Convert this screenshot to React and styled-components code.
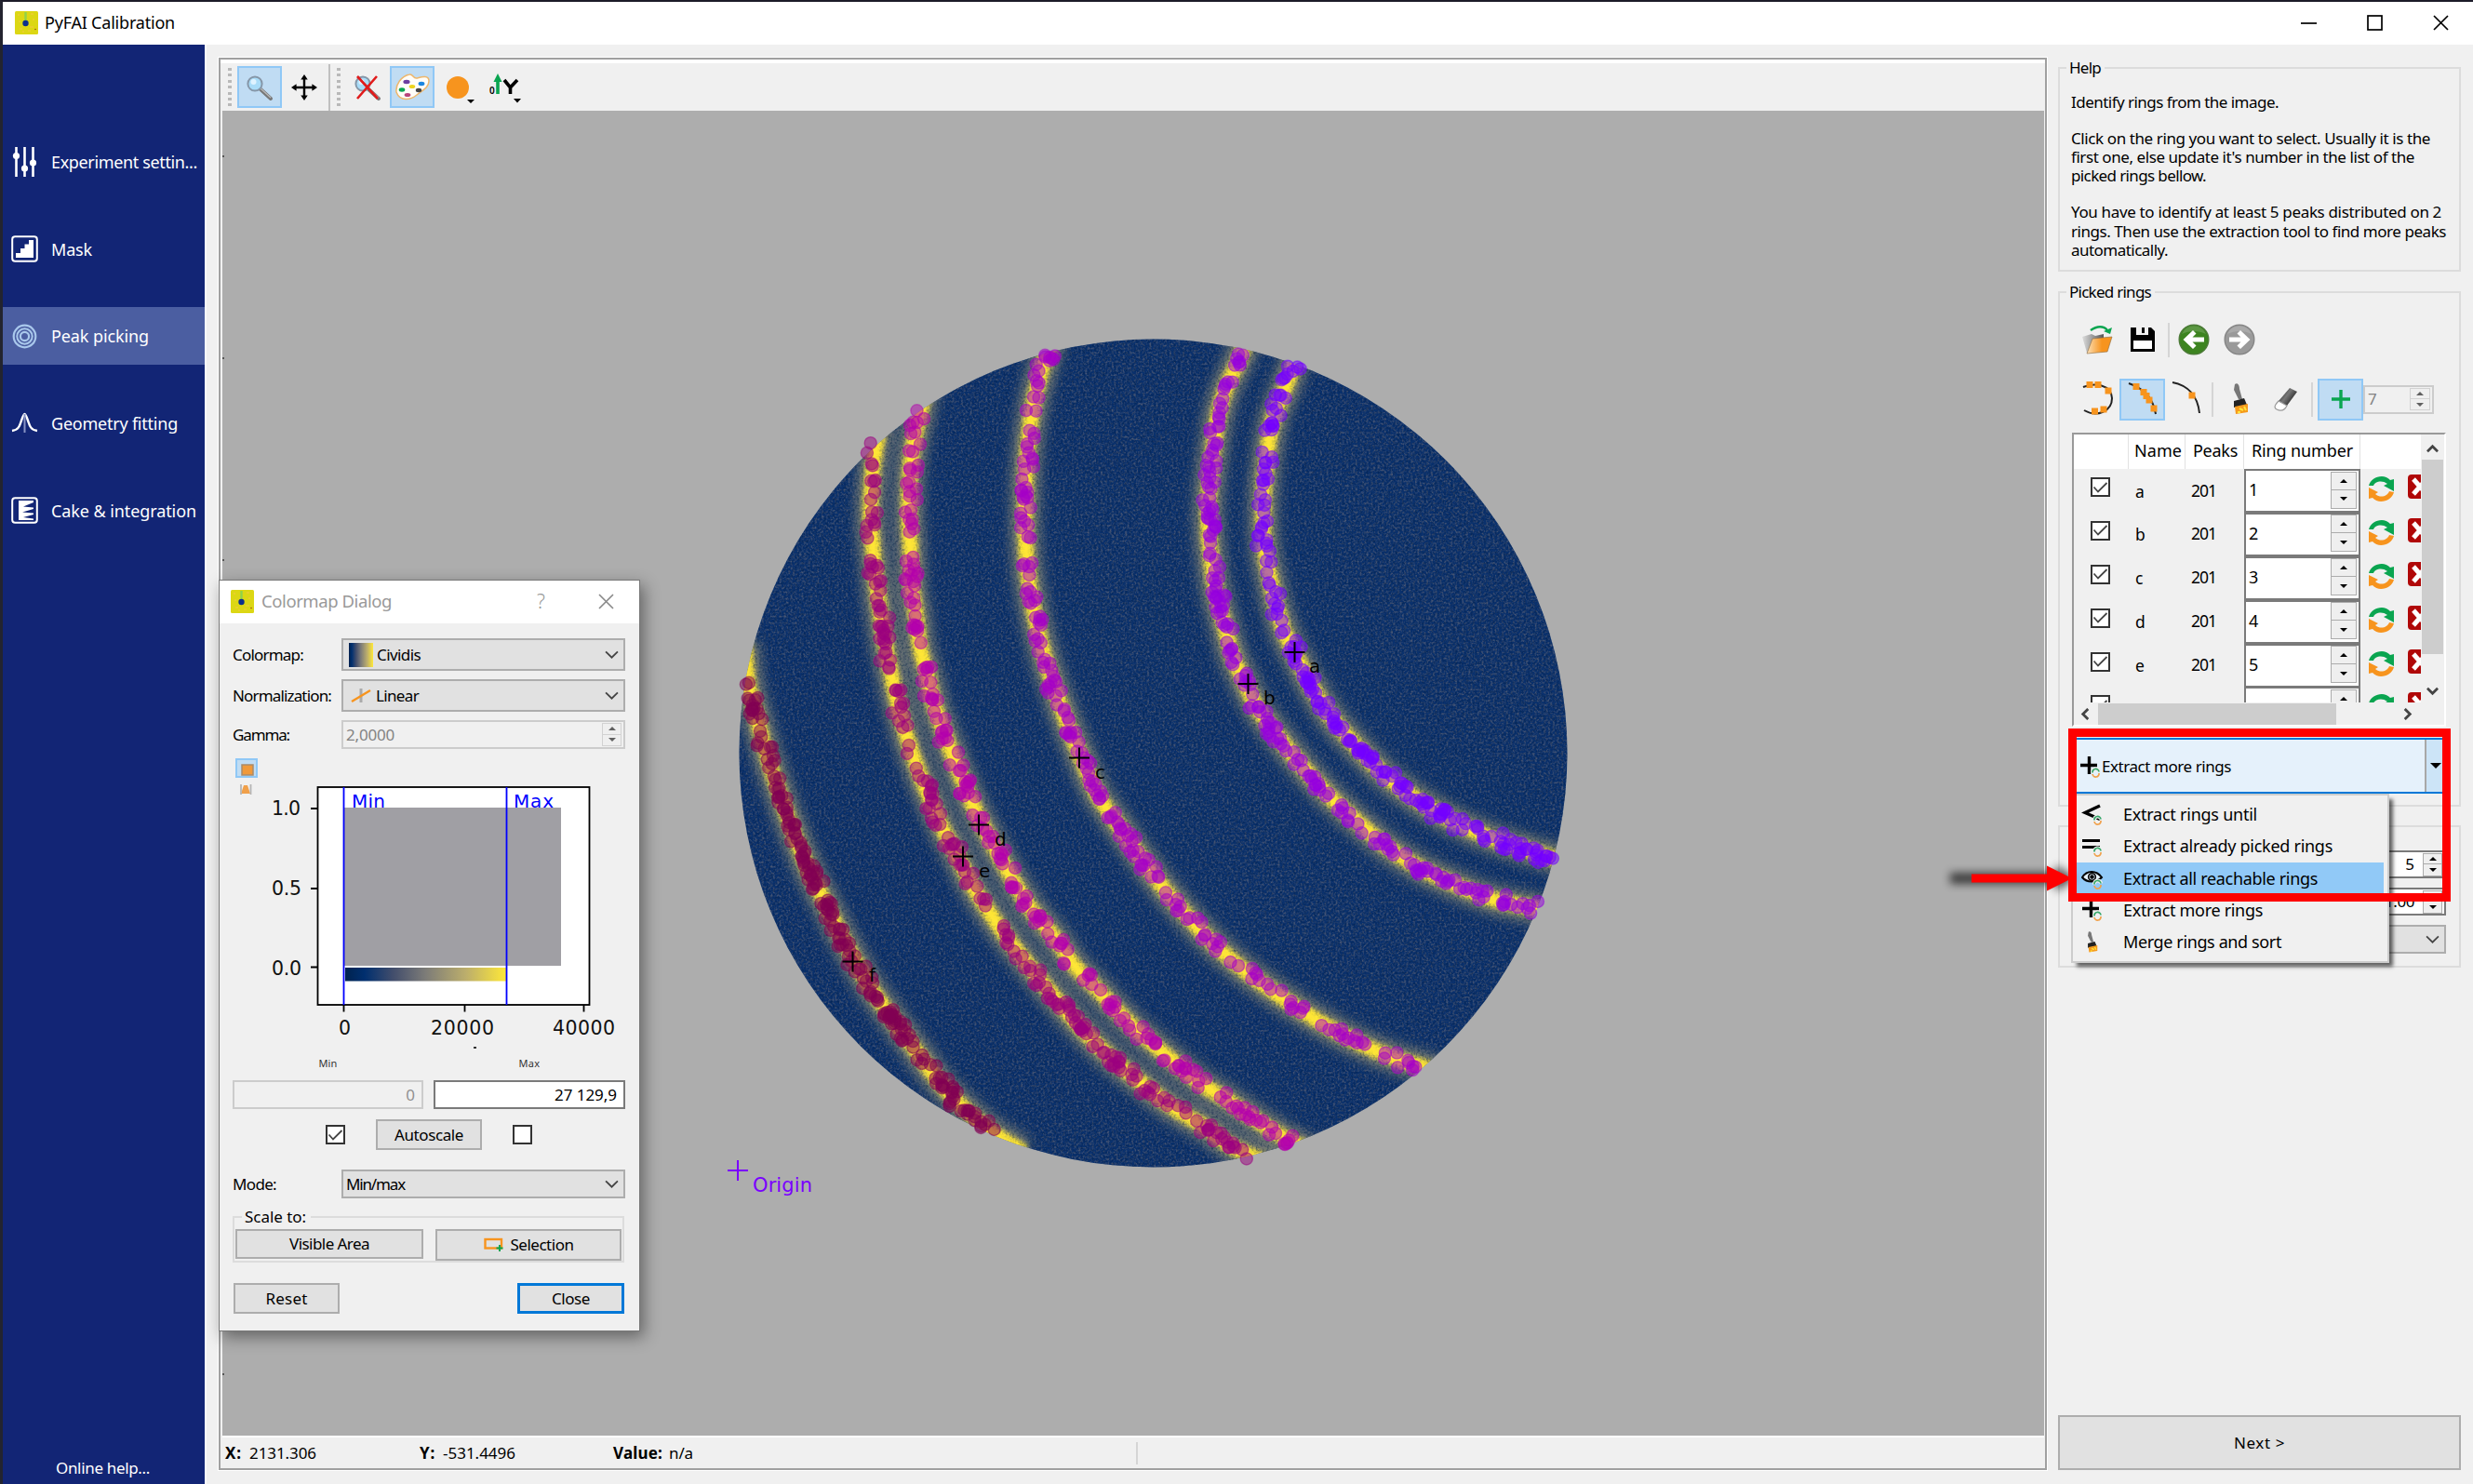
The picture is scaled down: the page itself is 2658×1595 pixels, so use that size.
import React, { useLayoutEffect, useRef, useState } from "react";
import styled, { createGlobalStyle, css } from "styled-components";

const UI = '"Noto Sans", "Open Sans", sans-serif';
const PLOT = '"DejaVu Sans", sans-serif';

const Global = createGlobalStyle`
  * { box-sizing: border-box; }
  html, body { margin: 0; padding: 0; background: #f0f0f0; overflow: hidden; }
  svg { display: block; flex: none; }
`;

/* ---------- text fitted to a given advance width ---------- */

const FitSpan = styled.span`
  display: inline-block;
  white-space: pre;
  flex: none;
`;

function Fit({ w, children }) {
  const ref = useRef(null);
  const [spacing, setSpacing] = useState(0);
  useLayoutEffect(() => {
    const natural = ref.current.getBoundingClientRect().width;
    setSpacing((w - natural) / String(children).length);
  }, [w, children]);
  return (
    <FitSpan ref={ref} style={{ letterSpacing: `${spacing}px` }}>
      {children}
    </FitSpan>
  );
}

/* ---------- window frame ---------- */

const Window = styled.div`
  position: relative;
  width: 2658px;
  height: 1595px;
  display: flex;
  flex-direction: column;
  background: #f0f0f0;
  border-top: 2px solid #1c1b29;
  border-left: 3px solid #23242f;
  font: 17px/20px ${UI};
  color: #000;
  overflow: hidden;
`;

const TitleBar = styled.header`
  height: 46px;
  flex: none;
  display: flex;
  align-items: center;
  background: #fff;
  padding: 0 26px 2px 13px;
  font-size: 18px;
  gap: 7px;
`;

const Spacer = styled.div`
  flex: 1;
`;

const CaptionButtons = styled.div`
  display: flex;
  align-items: center;
  gap: 54px;
`;

const Body = styled.div`
  flex: 1;
  display: flex;
  min-height: 0;
`;

const Sidebar = styled.nav`
  width: 219px;
  flex: none;
  display: flex;
  flex-direction: column;
  background: #122575;
  border-right: 2px solid #fbfbfb;
  padding-top: 95px;
  gap: 31.7px;
  color: #fff;
  font-size: 18px;
`;

const NavItem = styled.div`
  height: 62px;
  flex: none;
  display: flex;
  align-items: center;
  gap: 14px;
  padding-left: 9px;
  background: ${(p) => (p.$active ? "#4b5ea1" : "transparent")};
`;

const OnlineHelp = styled.div`
  margin: auto 2px 7px 0;
  text-align: center;
  font-size: 17px;
`;

/* ---------- plot panel ---------- */

const PlotPanel = styled.section`
  margin: 14px 0 15px 13px;
  width: 1965px;
  flex: none;
  display: flex;
  flex-direction: column;
  border: 2px solid #a0a0a0;
  outline: 1px solid #fff;
  padding: 2px 1px 0 2px;
  background: linear-gradient(#fff 0 4px, #f0f0f0 4px);
`;

const PlotToolbar = styled.div`
  height: 53px;
  flex: none;
  display: flex;
  align-items: center;
  padding: 2px 0 0 6px;
`;

const Handle = styled.div`
  width: 4px;
  height: 42px;
  margin-right: ${(p) => p.$gap}px;
  background: repeating-linear-gradient(#b9b9b9 0 3px, transparent 3px 6.4px);
`;

const ToolButton = styled.div`
  width: ${(p) => p.$w || 48}px;
  height: 45px;
  flex: none;
  display: flex;
  align-items: center;
  justify-content: center;
  border: 2px solid ${(p) => (p.$on ? "#90c8f6" : "transparent")};
  background: ${(p) => (p.$on ? "#c0dcf3" : "transparent")};
`;

const ToolSeparator = styled.div`
  width: 2px;
  height: ${(p) => p.$h}px;
  margin: 0 ${(p) => p.$r}px 0 ${(p) => p.$l}px;
  background: ${(p) => p.$c || "#d5d5d5"};
`;

const Canvas = styled.div`
  flex: 1;
  min-height: 0;
  background: #adadad;
  overflow: hidden;
`;

const StatusBar = styled.footer`
  height: 35px;
  flex: none;
  display: flex;
  align-items: center;
  border-top: 2px solid #fff;
  padding: 1px 0 0 3px;
`;

const StatusItem = styled.div`
  display: flex;
  gap: ${(p) => p.$gap}px;
  width: ${(p) => p.$w}px;
  b { font-weight: 700; }
`;

/* ---------- right column ---------- */

const Column = styled.aside`
  margin: 24px 0 15px 12px;
  width: 433px;
  flex: none;
  display: flex;
  flex-direction: column;
`;

const Group = styled.section`
  height: ${(p) => p.$h}px;
  margin-bottom: ${(p) => p.$mb}px;
  flex: none;
  display: flex;
  flex-direction: column;
  align-items: flex-start;
  border: 2px solid #dcdcdc;
`;

const GroupTitle = styled.h2`
  margin: -12px 0 0 7px;
  height: 22px;
  padding: 0 4px 0 3px;
  background: #f0f0f0;
  font: 17px/22px ${UI};
`;

const HelpText = styled.p`
  margin: ${(p) => p.$mt}px 0 0 12px;
  display: flex;
  flex-direction: column;
  align-items: flex-start;
  line-height: 20.2px;
`;

const Tools = styled.div`
  height: 46px;
  margin: ${(p) => p.$mt}px 0 0 15px;
  display: flex;
  align-items: center;
`;

const Spin = styled.div`
  width: ${(p) => p.$w}px;
  height: ${(p) => p.$h}px;
  flex: none;
  display: flex;
  align-items: center;
  justify-content: ${(p) => (p.$right ? "flex-end" : "space-between")};
  gap: 9px;
  padding: 0 2px 0 ${(p) => p.$pl || 3}px;
  border: 2px solid ${(p) => (p.$off ? "#cccccc" : "#7a7a7a")};
  background: ${(p) => (p.$off ? "#f0f0f0" : "#fff")};
  color: ${(p) => (p.$off ? "#838383" : "#000")};
`;

const StepBox = styled.div`
  width: ${(p) => p.$w}px;
  height: ${(p) => p.$h}px;
  display: grid;
  grid-template-rows: 1fr 1fr;
`;

const Step = styled.div`
  display: flex;
  align-items: center;
  justify-content: center;
  border: 1.5px solid ${(p) => (p.$off ? "#d2d2d2" : "#acacac")};
  background: #efefef;
  & + & { border-top: 0; }
`;

const Triangle = styled.i`
  width: 0;
  height: 0;
  border: ${(p) => p.$s}px solid transparent;
  ${(p) => p.$up
    ? css`border-top: 0; border-bottom: ${p.$s}px solid ${p.$c || "#000"};`
    : css`border-bottom: 0; border-top: ${p.$s}px solid ${p.$c || "#000"};`}
`;

function Stepper({ w, h, off, s = 4.5 }) {
  const c = off ? "#606060" : "#000";
  return (
    <StepBox $w={w} $h={h}>
      <Step $off={off}><Triangle $up $s={s} $c={c} /></Step>
      <Step $off={off}><Triangle $s={s} $c={c} /></Step>
    </StepBox>
  );
}

const Table = styled.div`
  width: 402px;
  height: 316px;
  margin: 13px 0 0 13px;
  display: grid;
  grid-template: 288px 1fr / 1fr 25px;
  border: 2px solid #999;
  border-right-color: #fff;
  border-bottom-color: #fff;
  background: #f0f0f0;
`;

const TableView = styled.div`
  overflow: hidden;
  font-size: 18px;
`;

const GRID = "grid-template-columns: 59px 61px 63px 125px 66px;";

const HeadRow = styled.div`
  display: grid;
  ${GRID}
  height: 37px;
  background: #fff;
`;

const HeadCell = styled.div`
  display: flex;
  align-items: center;
  padding: 0 0 3px ${(p) => p.$pl || 0}px;
  border-right: 1.5px solid #e2e2e2;
  &:last-child { border: 0; }
`;

const Row = styled.div`
  display: grid;
  ${GRID}
  height: 46.9px;
`;

const Cell = styled.div`
  display: flex;
  align-items: ${(p) => (p.$top ? "flex-start" : "center")};
  padding: ${(p) => p.$p || "0"};
  overflow: hidden;
  font-size: 17.5px;
`;

const RingSpin = styled(Spin)`
  padding-bottom: 2px;
  span { margin-bottom: 1px; }
`;

const ActionCell = styled(Cell)`
  gap: 13px;
  align-items: flex-start;
  padding: 6px 0 0 7px;
`;

const VScroll = styled.div`
  display: flex;
  flex-direction: column;
  align-items: center;
  justify-content: space-between;
  padding: 9px 0 6px 0;
`;

const HScroll = styled.div`
  display: flex;
  align-items: center;
  justify-content: space-between;
  padding: 0 8px 0 6px;
`;

const VThumb = styled.div`
  width: 23px;
  height: 209px;
  margin: 5px 0 auto;
  flex: none;
  background: #cdcdcd;
`;

const HThumb = styled.div`
  width: 256px;
  height: 23px;
  flex: none;
  margin-right: auto;
  margin-left: 7px;
  background: #cdcdcd;
`;

const Box = styled.div`
  width: ${(p) => p.$w || 21}px;
  height: ${(p) => p.$h || 21}px;
  flex: none;
  display: flex;
  align-items: center;
  justify-content: center;
  border: 2px solid #333;
  background: #fff;
`;

const SplitButton = styled.div`
  width: 401px;
  height: 60px;
  margin: 12px 0 0 14px;
  display: flex;
  border: 2px solid #0078d7;
  background: #e5f1fb;
`;

const SplitMain = styled.div`
  flex: 1;
  display: flex;
  align-items: center;
  gap: 0;
  padding: 2px 0 0 5px;
  border-right: 2px solid #a8a8a8;
`;

const SplitArrow = styled.div`
  width: 19px;
  display: flex;
  align-items: center;
  justify-content: center;
  background: #cce4f7;
`;

const Fields = styled.div`
  display: flex;
  flex-direction: column;
  align-self: stretch;
  align-items: flex-end;
  padding: 25px 14px 0 0;
  gap: 10px;
`;

const NextButton = styled.div`
  height: 59px;
  margin-top: auto;
  display: flex;
  align-items: center;
  justify-content: center;
  border: 2px solid #adadad;
  background: #e1e1e1;
`;

const Combo = styled.div`
  width: ${(p) => p.$w}px;
  height: ${(p) => p.$h}px;
  flex: none;
  display: flex;
  align-items: center;
  gap: ${(p) => p.$gap || 0}px;
  padding: 0 5px 0 ${(p) => p.$pl || 3}px;
  border: 2px solid #adadad;
  background: #e1e1e1;
`;

/* ---------- popup menu ---------- */

const Menu = styled.div`
  position: absolute;
  left: 2223px;
  top: 851px;
  width: 342px;
  height: 182px;
  padding: 3px 4px 2px;
  border: 2px solid #ccc;
  background: #f0f0f0;
  box-shadow: 5px 5px 4px -1px rgba(0, 0, 0, 0.6);
  font-size: 18px;
`;

const MenuItem = styled.div`
  height: 34.3px;
  display: flex;
  align-items: center;
  padding-left: 5px;
  gap: 21px;
  background: ${(p) => (p.$on ? "#91c9f7" : "transparent")};
`;

const Highlight = styled.div`
  position: absolute;
  left: 2220px;
  top: 781px;
  width: 411px;
  height: 186px;
  border: 9px solid #fe0000;
`;

const Pointer = styled.svg`
  position: absolute;
  left: 2067px;
  top: 909px;
`;

/* ---------- dialog ---------- */

const Dialog = styled.div`
  position: absolute;
  left: 232px;
  top: 621px;
  width: 453px;
  height: 808px;
  display: flex;
  flex-direction: column;
  border: 1.5px solid #777;
  background: #f0f0f0;
  box-shadow: 4px 6px 16px rgba(0, 0, 0, 0.42);
`;

const DialogTitle = styled.header`
  height: 46px;
  flex: none;
  display: flex;
  align-items: center;
  padding: 0 27px 2px 12px;
  gap: 8px;
  background: #fff;
  color: #999;
  font-size: 18.5px;
`;

const FormRow = styled.div`
  height: ${(p) => p.$h}px;
  flex: none;
  margin: ${(p) => p.$mt}px 15px 0 14px;
  display: flex;
  align-items: center;
  justify-content: space-between;
`;

const Histogram = styled.svg`
  margin: 5px 0 0 14px;
`;

const MiniLabels = styled.div`
  height: 16px;
  margin: 2px 15px 0 14px;
  display: grid;
  grid-template-columns: 205px 206px;
  justify-content: space-between;
  justify-items: center;
  font-size: 11px;
  line-height: 16px;
  color: #333;
`;

const Field = styled.div`
  width: ${(p) => p.$w}px;
  height: 31px;
  display: flex;
  align-items: center;
  justify-content: flex-end;
  padding-right: 7px;
  border: 2px solid ${(p) => (p.$off ? "#ccc" : "#7a7a7a")};
  background: ${(p) => (p.$off ? "#f0f0f0" : "#fff")};
  color: ${(p) => (p.$off ? "#909090" : "#000")};
`;

const AutoRow = styled.div`
  height: 33px;
  flex: none;
  display: flex;
  align-items: center;
  gap: 33px;
  margin: 11px 0 0 114px;
`;

const Button = styled.div`
  width: ${(p) => p.$w}px;
  height: ${(p) => p.$h || 33}px;
  flex: none;
  display: flex;
  align-items: center;
  justify-content: center;
  gap: 7px;
  border: ${(p) => (p.$focus ? "3px solid #0078d7" : "2px solid #adadad")};
  background: #e1e1e1;
`;

const ScaleGroup = styled.div`
  width: 421px;
  height: 50px;
  flex: none;
  margin: 19px 0 0 14px;
  border: 2px solid #dcdcdc;
`;

const ScaleTitle = styled.div`
  width: 74px;
  height: 20px;
  margin: -11px 0 0 8px;
  padding-left: 3px;
  line-height: 20px;
  background: #f0f0f0;
`;

const ScaleButtons = styled.div`
  display: flex;
  justify-content: space-between;
  padding: 3px 1px 0;
`;

const DialogButtons = styled.div`
  display: flex;
  justify-content: space-between;
  margin: 22px 16px 0 15px;
`;

/* ---------- icons ---------- */

const AppIcon = ({ s = 25 }) => (
  <svg width={s} height={s} viewBox="0 0 25 25">
    <rect width="25" height="25" rx="1.5" fill="#dcd714" />
    <path d="M3 4h2M17 3h3M5 19h3M16 17h4M4 11h2M19 9h2M8 22h2M14 21h3" stroke="#e9cf2c" strokeWidth="2" />
    <path d="M11.5 1v10" stroke="#8fd24a" strokeWidth="2.4" />
    <circle cx="11.500" cy="13" r="3.200" fill="#0c2f8c" />
    <circle cx="22" cy="19.500" r=".8" fill="#a04a10" />
  </svg>
);

const Sliders = () => (
  <svg width="29" height="34" viewBox="0 0 29 34" stroke="#fff" fill="#fff">
    <path d="M5.500 1v32M14.500 1v32M23.500 1v32" strokeWidth="2.600" />
    <circle cx="5.500" cy="10.500" r="3.600" stroke="none" />
    <circle cx="14.500" cy="24" r="3.600" stroke="none" />
    <circle cx="23.500" cy="18" r="3.600" stroke="none" />
  </svg>
);
const MaskIcon = () => (
  <svg width="29" height="29" viewBox="0 0 29 29">
    <rect x="1.200" y="1.200" width="26.600" height="26.600" rx="3" fill="none" stroke="#fff" strokeWidth="2" />
    <path d="M5 24v-5h5v-5h4.500v-4.500h4.500V5h5v19z" fill="#fff" />
  </svg>
);
const RingsIcon = () => (
  <svg width="29" height="29" viewBox="0 0 29 29" fill="none" stroke="#a9c8ec">
    <circle cx="14.500" cy="14.500" r="11.800" strokeWidth="2.200" />
    <circle cx="14.500" cy="14.500" r="8.200" strokeWidth="2" />
    <circle cx="14.500" cy="14.500" r="4.600" strokeWidth="2.200" />
  </svg>
);
const PeakIcon = () => (
  <svg width="29" height="24" viewBox="0 0 29 24" fill="none" stroke="#fff">
    <path d="M1 20c7-1 8-5 10-11s3-7 3.500-7 1.500 1 3.500 7 3 10 10 11" strokeWidth="2.400" />
    <path d="M14.500 2v20" stroke="#8793c4" strokeWidth="2" />
  </svg>
);
const CakeIcon = () => (
  <svg width="29" height="29" viewBox="0 0 29 29" fill="none" stroke="#fff">
    <rect x="1.200" y="1.200" width="26.600" height="26.600" rx="3" strokeWidth="2" />
    <path d="M8 4v21h16v-1.500l-11-1.500 11-3v-1.500l-12-1 12-3.500v-1.500l-11-1L24 6V4z" fill="#fff" stroke="none" />
  </svg>
);

const Lens = ({ crossed }) => (
  <svg width="32" height="30" viewBox="0 0 32 30">
    <path d="M16 16l12 11" stroke="#777" strokeWidth="4" strokeLinecap="round" />
    <path d="M17 16l11 10" stroke="#bbb" strokeWidth="1.200" />
    <circle cx="11" cy="11" r="7.600" fill="#a9dcf8" stroke="#8697a8" strokeWidth="2" />
    <circle cx="9.500" cy="9" r="3" fill="#dff3ff" />
    {crossed && <path d="M5 3l22 24M26 3L5 27" stroke="#e01b1b" strokeWidth="2.600" />}
  </svg>
);
const MoveIcon = () => (
  <svg width="28" height="28" viewBox="0 0 30 30">
    <path d="M15 4v22M4 15h22" stroke="#000" strokeWidth="2.600" />
    <path d="M15 0l4 6h-8zM15 30l4-6h-8zM0 15l6-4v8zM30 15l-6-4v8z" />
  </svg>
);
const Palette = () => (
  <svg width="38" height="30" viewBox="0 0 38 30">
    <path d="M2 20C1 12 7 3 16 1c4-1 4 5 8 4s13-4 13 3-7 10-13 15S6 31 2 20z" fill="#fffdf8" stroke="#edb76d" strokeWidth="1.500" />
    <ellipse cx="13" cy="9" rx="3.600" ry="2.200" fill="#6d3fa0" />
    <ellipse cx="29" cy="11" rx="3.400" ry="2.200" fill="#1c86e0" />
    <ellipse cx="19" cy="14" rx="3.300" ry="2" fill="#ecd41e" />
    <ellipse cx="8" cy="17.500" rx="3.300" ry="2.200" fill="#0aa550" />
    <ellipse cx="26" cy="18" rx="3.200" ry="2.200" fill="#444" />
    <ellipse cx="14" cy="23" rx="3.400" ry="2.100" fill="#b8447a" />
  </svg>
);
const DiscIcon = () => (
  <svg width="34" height="34" viewBox="0 0 34 34">
    <circle cx="15" cy="17" r="12" fill="#f7941e" />
    <path d="M25 30h8l-4 4z" />
  </svg>
);
const YAxisIcon = () => (
  <svg width="38" height="34" viewBox="0 0 38 34">
    <text x="2" y="24" fontFamily={UI} fontSize="10" fontWeight="600">0</text>
    <path d="M11 24V11" stroke="#0aa550" strokeWidth="3.600" />
    <path d="M11 2l4.500 9h-9z" fill="#0aa550" />
    <path d="M18 9l6.500 8V24M32 9l-7.500 8" stroke="#000" strokeWidth="3.600" fill="none" />
    <path d="M28 29h8l-4 4.500z" />
  </svg>
);

const FolderIcon = () => (
  <svg width="36" height="32" viewBox="0 0 36 32">
    <defs>
      <linearGradient id="fold" x1="0" x2="1"><stop offset="0" stopColor="#fbe0b8" /><stop offset=".6" stopColor="#f7941e" /></linearGradient>
      <linearGradient id="foldb" x1="0" x2="1"><stop offset="0" stopColor="#ddd" /><stop offset="1" stopColor="#555" /></linearGradient>
    </defs>
    <path d="M2 13l10-3 4 2 9-2v8L7 30z" fill="url(#foldb)" />
    <path d="M13 15l21-2-5 16L7 31z" fill="url(#fold)" stroke="#8a6a40" strokeWidth=".6" />
    <path d="M11 6c7-5 14-5 18 0" fill="none" stroke="#0aa550" strokeWidth="2.400" />
    <path d="M25 7l9-4-2 7z" fill="#0aa550" />
  </svg>
);
const FloppyIcon = () => (
  <svg width="28" height="28" viewBox="0 0 28 28">
    <path d="M1 1h22l4 4v22H1z" />
    <path d="M7 1h13v8H7z" fill="#f0f0f0" /><path d="M13 1h3v6h-3z" />
    <path d="M4 15h20v9H4z" fill="#fff" />
  </svg>
);
const RoundArrow = ({ forward }) => (
  <svg width="34" height="34" viewBox="0 0 34 34">
    <circle cx="17" cy="17" r="15.800" fill={forward ? "#9a9a9a" : "#3d8420"} stroke={forward ? "#858585" : "#4c7a38"} strokeWidth="1.400" />
    <path d="M4 11a14 14 0 0 1 26 0c-8-4-18-4-26 0z" fill="#fff" opacity=".16" />
    <path
      transform={forward ? "translate(34 0) scale(-1 1)" : undefined}
      d="M5.500 17L16 7l3.500 3.500-4 4H28v5H15.500l4 4L16 27z" fill="#fff"
    />
  </svg>
);
const Nodes = ({ d, pts, w = 36 }) => (
  <svg width={w} height="40" viewBox={`0 0 ${w} 40`}>
    <path d={d} fill="none" stroke="#222" strokeWidth="2" />
    {pts.map(([x, y], i) => <rect key={i} x={x - 3.500} y={y - 3.500} width="7" height="7" fill="#f7941e" />)}
  </svg>
);
const ArcNodes = () => <Nodes d="M3 7c12-5 30-3 31 12 0 14-16 21-30 13" pts={[[10, 4.500], [19, 4.500], [30, 11], [25, 31], [15.500, 33]]} />;
const BandNodes = () => <Nodes d="M5 3c15 5 26 14 29 33" pts={[[13, 6.500], [21, 12.500], [24, 16.500], [27, 21], [32, 30]]} w={40} />;
const OneNode = () => <Nodes d="M3 2c16 3 27 14 29 33" pts={[[24, 16]]} />;
const Brush = ({ s = 1 }) => (
  <svg width={20 * s} height={34 * s} viewBox="0 0 20 34">
    <path d="M4 1c3-2 5 1 5 5l3 11H8L3 7z" fill="#777" />
    <path d="M3 19l11-3 3 7-14 3z" fill="#222" />
    <path d="M4 25l14-3v9l-13 2z" fill="#f59a1c" />
    <path d="M9 27l4 2M14 25l2 4M7 31h3" stroke="#ffe53a" strokeWidth="2" />
  </svg>
);
const Eraser = () => (
  <svg width="26" height="26" viewBox="0 0 26 26">
    <defs><linearGradient id="er" x1="0" y1="0" x2="1" y2=".7"><stop offset="0" stopColor="#111" /><stop offset=".5" stopColor="#777" /><stop offset="1" stopColor="#111" /></linearGradient></defs>
    <path d="M17 1l8 4-11 15-9-5z" fill="url(#er)" />
    <path d="M5 15l9 5c-3 6-7 6-11 4s-1-6 2-9z" fill="#fff" stroke="#999" strokeWidth="1.200" />
  </svg>
);
const GreenPlus = () => (
  <svg width="20" height="20" viewBox="0 0 20 20"><path d="M10 0v20M0 10h20" stroke="#0aa550" strokeWidth="3.400" /></svg>
);
const Tick = () => (
  <svg width="17" height="14" viewBox="0 0 17 14"><path d="M1.500 6.500l4.500 5L15.500 2" fill="none" stroke="#444" strokeWidth="1.800" /></svg>
);
const Refresh = () => (
  <svg width="31" height="31" viewBox="0 0 31 31">
    <path d="M2 12C4 3 18-2 25 6l4-1v13l-11-6 4-2C16 5 8 8 7 12z" fill="#0aa550" />
    <path d="M29 19c-2 9-16 14-23 6l-4 1V14l10 5-3 2c6 5 13 2 15-3z" fill="#f7941e" />
  </svg>
);
const RemoveIcon = () => (
  <svg width="26" height="26" viewBox="0 0 26 26">
    <rect width="26" height="26" rx="4" fill="#b00808" />
    <path d="M6 5l14 16M20 5L6 21" stroke="#fff" strokeWidth="5" />
  </svg>
);
const Chevron = ({ dir = "down", w = 14, sw = 2, c = "#444" }) => {
  const rot = { down: 0, up: 180, left: 90, right: -90 }[dir];
  return (
    <svg width={w} height={w} viewBox="0 0 14 14">
      <path transform={`rotate(${rot} 7 7)`} d="M1 4l6 6 6-6" fill="none" stroke={c} strokeWidth={sw} />
    </svg>
  );
};
const MenuGlyph = ({ kind }) => (
  <svg width="24" height="26" viewBox="0 0 24 26">
    {kind === "more" && <path d="M10.500 2v19M1 11.500h18" stroke="#000" strokeWidth="3.400" />}
    {kind === "until" && <path d="M20 4L4 11.500l16 7" fill="none" stroke="#000" strokeWidth="3.400" />}
    {kind === "equal" && <path d="M1 7.500h19M1 14.500h19" stroke="#000" strokeWidth="3.200" />}
    {kind === "eye" && (
      <g fill="none" stroke="#000" strokeWidth="2">
        <path d="M1 12C6 4 16 4 22 12 16 18 6 18 1 12z" fill="#e6f2fb" />
        <circle cx="11.500" cy="11.500" r="3.800" strokeWidth="1.600" /><circle cx="11.500" cy="11.500" r="1.300" fill="#000" />
      </g>
    )}
    <path d="M14 19.500a3.500 3.500 0 0 1 7-1" fill="none" stroke="#f0f0f0" strokeWidth="4" />
    <path d="M14 19.500a3.500 3.500 0 0 1 7-1" fill="none" stroke="#37a76a" strokeWidth="1.700" />
    <path d="M21 20a3.500 3.500 0 0 1-7 1" fill="none" stroke="#f0a04a" strokeWidth="1.700" />
  </svg>
);
const LinearIcon = () => (
  <svg width="22" height="18" viewBox="0 0 22 18">
    <path d="M11 1v15" stroke="#aaa" strokeWidth="3" /><path d="M1 15L21 3" stroke="#f7941e" strokeWidth="2.400" />
  </svg>
);
const CividisIcon = () => (
  <svg width="26" height="26">
    <defs>
      <linearGradient id="cividis">
        <stop offset="0" stopColor="#00224e" /><stop offset=".12" stopColor="#002f6f" /><stop offset=".3" stopColor="#434e6c" />
        <stop offset=".5" stopColor="#7d7c78" /><stop offset=".75" stopColor="#bcae6c" /><stop offset="1" stopColor="#fee838" />
      </linearGradient>
    </defs>
    <rect width="26" height="26" fill="url(#cividis)" />
  </svg>
);
const SelectionIcon = () => (
  <svg width="22" height="16" viewBox="0 0 22 16">
    <rect x="1.500" y="2" width="17.500" height="9.500" fill="none" stroke="#f7941e" strokeWidth="2.400" />
    <path d="M17 8v7M13.500 11.500h7" stroke="#0aa550" strokeWidth="2" />
  </svg>
);

/* ---------- diffraction image ---------- */

const RINGS = [
  { name: "a", color: "#7300ff", mark: [1391.5, 701], label: [1407, 723], pts: [[1396, 372], [1390, 393], [1379, 423], [1368, 452], [1362, 489], [1358, 534], [1359, 587], [1364, 615], [1372, 652], [1383, 685], [1397, 713], [1410, 738], [1430, 770], [1457, 801], [1487, 832], [1527, 862], [1563, 883], [1603, 901], [1637, 912], [1669, 922], [1700, 930]] },
  { name: "b", color: "#9500e0", mark: [1341.5, 735], label: [1358, 757], pts: [[1342, 358], [1334, 381], [1327, 397], [1317, 419], [1309, 448], [1303, 493], [1299, 534], [1299, 570], [1302, 603], [1307, 636], [1315, 668], [1325, 705], [1338, 734], [1352, 762], [1375, 793], [1400, 824], [1430, 857], [1460, 884], [1493, 912], [1530, 935], [1567, 952], [1603, 966], [1651, 977], [1680, 985]] },
  { name: "c", color: "#a600c8", mark: [1160, 814.5], label: [1177, 837], pts: [[1130, 362], [1125, 380], [1117, 407], [1111, 433], [1106, 467], [1103, 500], [1102, 537], [1102, 577], [1105, 617], [1110, 650], [1117, 683], [1126, 717], [1137, 750], [1149, 783], [1163, 817], [1179, 853], [1202, 887], [1227, 923], [1255, 960], [1297, 1007], [1330, 1037], [1363, 1062], [1400, 1087], [1437, 1109], [1473, 1127], [1507, 1140], [1522, 1144], [1560, 1157]] },
  { name: "d", color: "#b300ae", mark: [1052, 886.5], label: [1069, 909], pts: [[994, 420], [989, 442], [983, 470], [979, 497], [977, 530], [977, 563], [979, 597], [980, 630], [984, 657], [989, 697], [997, 727], [1004, 757], [1013, 783], [1028, 823], [1042, 857], [1054, 883], [1070, 913], [1087, 943], [1108, 977], [1133, 1007], [1154, 1037], [1180, 1064], [1210, 1096], [1240, 1123], [1290, 1164], [1317, 1181], [1347, 1202], [1386, 1226], [1410, 1238]] },
  { name: "e", color: "#9c0080", mark: [1035, 920.5], label: [1052, 943], pts: [[946, 455], [942, 477], [938, 507], [936, 537], [936, 563], [939, 597], [942, 627], [946, 657], [951, 690], [957, 720], [964, 753], [972, 783], [980, 808], [989, 833], [1000, 860], [1013, 890], [1029, 920], [1044, 950], [1063, 980], [1084, 1010], [1110, 1043], [1137, 1076], [1163, 1106], [1193, 1136], [1227, 1164], [1260, 1190], [1298, 1213], [1320, 1230], [1342, 1241], [1370, 1254]] },
  { name: "f", color: "#820054", mark: [916.5, 1033.5], label: [934, 1055], pts: [[800, 690], [804, 734], [808, 750], [817, 785], [827, 820], [838, 853], [850, 887], [860, 913], [873, 943], [887, 970], [903, 1003], [923, 1040], [938, 1065], [963, 1100], [985, 1130], [1007, 1160], [1027, 1182], [1047, 1201], [1066, 1217], [1100, 1238]] },
];

const spline = (p) => {
  let d = `M${p[0]}`;
  for (let i = 0; i < p.length - 1; i++) {
    const a = p[i - 1] || p[i], b = p[i], c = p[i + 1], e = p[i + 2] || c;
    d += `C${b[0] + (c[0] - a[0]) / 6} ${b[1] + (c[1] - a[1]) / 6} ${c[0] - (e[0] - b[0]) / 6} ${c[1] - (e[1] - b[1]) / 6} ${c}`;
  }
  return d;
};

const random = (seed) => () => {
  seed = (seed * 1664525 + 1013904223) % 4294967296;
  return seed / 4294967296;
};

function peaks(pts, seed) {
  const rnd = random(seed);
  const inner = pts.slice(1, -1);
  const lens = inner.slice(1).map((q, i) => Math.hypot(q[0] - inner[i][0], q[1] - inner[i][1]));
  const total = lens.reduce((s, l) => s + l, 0);
  return Array.from({ length: 201 }, (_, n) => {
    let t = n === 0 ? 0 : n === 1 ? total : rnd() * total;
    let i = 0;
    while (i < lens.length - 1 && t > lens[i]) t -= lens[i++];
    const [x0, y0] = inner[i], [x1, y1] = inner[i + 1], L = lens[i];
    const j = (rnd() + rnd() - 1) * 10;
    return [x0 + ((x1 - x0) * t) / L - ((y1 - y0) / L) * j, y0 + ((y1 - y0) * t) / L + ((x1 - x0) / L) * j];
  });
}

const Cross = ({ x, y, color }) => (
  <path d={`M${x - 11} ${y}h22M${x} ${y - 11}v22`} stroke={color} strokeWidth="2" />
);

function Diffraction() {
  return (
    <svg width="1958" height="1425" viewBox="239 119 1958 1425">
      <defs>
        <clipPath id="disc"><circle cx="1239.500" cy="809.500" r="445" /></clipPath>
        <filter id="soft" filterUnits="userSpaceOnUse" x="780" y="340" width="930" height="930"><feGaussianBlur stdDeviation="6.500" /></filter>
        <filter id="core" filterUnits="userSpaceOnUse" x="780" y="340" width="930" height="930"><feGaussianBlur stdDeviation="2.500" /></filter>
        <filter id="light" filterUnits="userSpaceOnUse" x="790" y="360" width="900" height="900" colorInterpolationFilters="sRGB">
          <feTurbulence type="fractalNoise" baseFrequency="0.42" numOctaves="2" seed="4" />
          <feColorMatrix values="0 0 0 0 0.42  0 0 0 0 0.42  0 0 0 0 0.47  2.6 0 0 0 -1.1" />
        </filter>
        <filter id="dark" filterUnits="userSpaceOnUse" x="790" y="360" width="900" height="900" colorInterpolationFilters="sRGB">
          <feTurbulence type="fractalNoise" baseFrequency="0.42" numOctaves="2" seed="19" />
          <feColorMatrix values="0 0 0 0 0  0 0 0 0 0.12  0 0 0 0 0.28  2.4 0 0 0 -1.05" />
        </filter>
      </defs>
      {[168, 385, 602, 819, 1477].map((y) => <path key={y} d={`M239 ${y}h2`} stroke="#555" strokeWidth="2" />)}
      <g clipPath="url(#disc)">
        <rect x="790" y="360" width="900" height="900" fill="#0a316d" />
        <g filter="url(#soft)" fill="none" stroke="#a59d72" strokeWidth="30" opacity=".85">
          {RINGS.map((r) => <path key={r.name} d={spline(r.pts)} />)}
        </g>
        <g filter="url(#core)" fill="none" stroke="#ffe634" strokeWidth="16">
          {RINGS.map((r) => <path key={r.name} d={spline(r.pts)} />)}
        </g>
        <rect x="790" y="360" width="900" height="900" filter="url(#light)" opacity=".65" />
        <rect x="790" y="360" width="900" height="900" filter="url(#dark)" opacity=".55" />
        <g filter="url(#core)" fill="none" stroke="#ffe634" strokeWidth="11">
          {RINGS.map((r) => <path key={r.name} d={spline(r.pts)} />)}
        </g>
      </g>
      {RINGS.map((r, i) => (
        <g key={r.name} fill={r.color} fillOpacity=".5" stroke={r.color} strokeOpacity=".5" strokeWidth="1.300">
          {peaks(r.pts, 77 + i * 1013).map(([x, y], n) => <circle key={n} cx={x.toFixed(1)} cy={y.toFixed(1)} r="6.600" />)}
        </g>
      ))}
      {RINGS.map((r) => (
        <g key={r.name}>
          <Cross x={r.mark[0]} y={r.mark[1]} color="#000" />
          <text x={r.label[0]} y={r.label[1]} fontFamily={PLOT} fontSize="20">{r.name}</text>
        </g>
      ))}
      <Cross x={793} y={1258} color="#7a00ff" />
      <text x="809" y="1281" fontFamily={PLOT} fontSize="21" fill="#7a00ff" textLength="64">Origin</text>
    </svg>
  );
}

function HistogramPlot() {
  return (
    <Histogram width="424" height="323" viewBox="250 810 424 323">
      <rect x="254" y="816" width="22" height="19" fill="#c0dcf3" stroke="#90c8f6" strokeWidth="2" />
      <path d="M260 822h12v11h-12z" fill="#f0993a" stroke="#a98a6a" strokeWidth="1.500" />
      <path d="M262 844h4l3 9h-10z" fill="#f0a04a" /><path d="M259 843v11M269.500 843v11" stroke="#b5b5b5" strokeWidth="1.800" />
      <rect x="341.500" y="846" width="292" height="234" fill="#fff" stroke="#000" strokeWidth="1.800" />
      <g fontFamily={PLOT} fontSize="20" fill="#0000fe">
        <text x="378" y="868" textLength="36">Min</text>
        <text x="552" y="868" textLength="43">Max</text>
      </g>
      <rect x="370" y="868" width="233" height="170" fill="#a09fa4" />
      <rect x="371" y="1040" width="173" height="14.500" fill="url(#cividis)" />
      <path d="M369.500 846v234M544.500 846v234" stroke="#0000fe" strokeWidth="1.800" />
      <path d="M334 869h7M334 955h7M334 1039.500h7M369.500 1080v7.500M499.500 1080v7.500M627.500 1080v7.500" stroke="#000" strokeWidth="1.800" />
      <g fontFamily={PLOT} fontSize="20.500" fill="#111">
        <text x="292" y="876" textLength="31">1.0</text>
        <text x="292" y="962" textLength="32">0.5</text>
        <text x="292" y="1047.500" textLength="32">0.0</text>
        <text x="364" y="1112">0</text>
        <text x="463" y="1112" textLength="68">20000</text>
        <text x="594" y="1112" textLength="67">40000</text>
      </g>
      <rect x="509" y="1125" width="3" height="2" fill="#333" />
    </Histogram>
  );
}

/* ---------- data ---------- */

const NAV = [
  { icon: <Sliders />, label: "Experiment settin...", w: 157 },
  { icon: <MaskIcon />, label: "Mask", w: 44 },
  { icon: <RingsIcon />, label: "Peak picking", w: 105, active: true },
  { icon: <PeakIcon />, label: "Geometry fitting", w: 136 },
  { icon: <CakeIcon />, label: "Cake & integration", w: 156 },
];

const HELP = [
  { mt: 15.5, lines: [["Identify rings from the image.", 223]] },
  { mt: 19, lines: [["Click on the ring you want to select. Usually it is the", 386], ["first one, else update it's number in the list of the", 369], ["picked rings bellow.", 145]] },
  { mt: 19, lines: [["You have to identify at least 5 peaks distributed on 2", 398], ["rings. Then use the extraction tool to find more peaks", 403], ["automatically.", 104]] },
];

const MENU = [
  { kind: "until", label: "Extract rings until", w: 144 },
  { kind: "equal", label: "Extract already picked rings", w: 225 },
  { kind: "eye", label: "Extract all reachable rings", w: 209, on: true },
  { kind: "more", label: "Extract more rings", w: 150 },
  { kind: "brush", label: "Merge rings and sort", w: 170 },
];

const BrushSlot = styled.span`
  width: 24px;
  display: flex;
  justify-content: center;
`;

const HelpMark = styled.span`
  margin-right: 49px;
  font-size: 21px;
  font-weight: 300;
`;

/* ---------- sections ---------- */

function RightColumn() {
  return (
    <Column>
      <Group $h={220} $mb={21}>
        <GroupTitle><Fit w={34}>Help</Fit></GroupTitle>
        {HELP.map((p, i) => (
          <HelpText key={i} $mt={p.mt}>
            {p.lines.map(([t, w]) => <Fit key={t} w={w}>{t}</Fit>)}
          </HelpText>
        ))}
      </Group>
      <Group $h={554} $mb={20}>
        <GroupTitle><Fit w={88}>Picked rings</Fit></GroupTitle>
        <Tools $mt={17}>
          <ToolButton $w={49}><FolderIcon /></ToolButton>
          <ToolButton $w={49}><FloppyIcon /></ToolButton>
          <ToolSeparator $h={37} $l={3} $r={2} />
          <ToolButton $w={48}><RoundArrow /></ToolButton>
          <ToolButton $w={49}><RoundArrow forward /></ToolButton>
        </Tools>
        <Tools $mt={18}>
          <ToolButton $w={49}><ArcNodes /></ToolButton>
          <ToolButton $w={49} $on><BandNodes /></ToolButton>
          <ToolButton $w={46}><OneNode /></ToolButton>
          <ToolSeparator $h={37} $l={4} $r={4} />
          <ToolButton $w={49}><Brush /></ToolButton>
          <ToolButton $w={49}><Eraser /></ToolButton>
          <ToolSeparator $h={37} $l={3} $r={5} />
          <ToolButton $w={49} $on><GreenPlus /></ToolButton>
          <Spin $w={76} $h={31} $off><Fit w={9}>7</Fit><Stepper w={22} h={24} off s={4.5} /></Spin>
        </Tools>
        <Table>
          <TableView>
            <HeadRow>
              <HeadCell />
              <HeadCell $pl={6}><Fit w={51}>Name</Fit></HeadCell>
              <HeadCell $pl={8}><Fit w={48}>Peaks</Fit></HeadCell>
              <HeadCell $pl={8}><Fit w={109}>Ring number</Fit></HeadCell>
              <HeadCell />
            </HeadRow>
            {["a", "b", "c", "d", "e", ""].map((n, i) => (
              <Row key={i}>
                <Cell $top $p="9px 0 0 18px"><Box><Tick /></Box></Cell>
                <Cell $p="0 0 0 7px">{n}</Cell>
                <Cell $p="0 0 2px 6px">{n && <Fit w={27}>201</Fit>}</Cell>
                <RingSpin $w={125} $h={47} $pl={3}><span>{n ? i + 1 : null}</span><Stepper w={28} h={40} /></RingSpin>
                <ActionCell><Refresh /><RemoveIcon /></ActionCell>
              </Row>
            ))}
          </TableView>
          <VScroll>
            <Chevron dir="up" w={13} sw={3} /><VThumb /><Chevron w={13} sw={3} />
          </VScroll>
          <HScroll>
            <Chevron dir="left" w={13} sw={3} /><HThumb /><Chevron dir="right" w={13} sw={3} />
          </HScroll>
        </Table>
        <SplitButton>
          <SplitMain><MenuGlyph kind="more" /><Fit w={139}>Extract more rings</Fit></SplitMain>
          <SplitArrow><Triangle $s={6} /></SplitArrow>
        </SplitButton>
      </Group>
      <Group $h={153} $mb={0}>
        <Fields>
          <Spin $w={200} $h={30} $right><span>5</span><Stepper w={21} h={25} s={4} /></Spin>
          <Spin $w={200} $h={30} $right><Fit w={32}>1.00</Fit><Stepper w={21} h={25} s={4} /></Spin>
          <Combo $w={200} $h={31}><Spacer /><Chevron w={15} sw={1.6} /></Combo>
        </Fields>
      </Group>
      <NextButton><Fit w={55}>{"Next >"}</Fit></NextButton>
    </Column>
  );
}

function ColormapDialog() {
  return (
    <Dialog>
      <DialogTitle>
        <AppIcon />
        <Fit w={140}>Colormap Dialog</Fit>
        <Spacer />
        <HelpMark>?</HelpMark>
        <svg width="17" height="17" viewBox="0 0 17 17"><path d="M1 1l15 15M16 1L1 16" stroke="#888" strokeWidth="1.600" /></svg>
      </DialogTitle>
      <FormRow $h={35} $mt={16}>
        <Fit w={76}>Colormap:</Fit>
        <Combo $w={305} $h={35} $pl={6} $gap={4}><CividisIcon /><Fit w={47}>Cividis</Fit><Spacer /><Chevron w={15} sw={1.7} /></Combo>
      </FormRow>
      <FormRow $h={35} $mt={9}>
        <Fit w={106}>Normalization:</Fit>
        <Combo $w={305} $h={35} $pl={8} $gap={5}><LinearIcon /><Fit w={46}>Linear</Fit><Spacer /><Chevron w={15} sw={1.7} /></Combo>
      </FormRow>
      <FormRow $h={31} $mt={9}>
        <Fit w={61}>Gamma:</Fit>
        <Spin $w={305} $h={31} $off><Fit w={52}>2,0000</Fit><Stepper w={21} h={25} off s={4} /></Spin>
      </FormRow>
      <HistogramPlot />
      <MiniLabels><Fit w={20}>Min</Fit><Fit w={23}>Max</Fit></MiniLabels>
      <FormRow $h={31} $mt={10}>
        <Field $w={205} $off>0</Field>
        <Field $w={206}><Fit w={67}>27 129,9</Fit></Field>
      </FormRow>
      <AutoRow>
        <Box><Tick /></Box>
        <Button $w={114}><Fit w={74}>Autoscale</Fit></Button>
        <Box />
      </AutoRow>
      <FormRow $h={31} $mt={21}>
        <Fit w={47}>Mode:</Fit>
        <Combo $w={305} $h={31}><Fit w={63}>Min/max</Fit><Spacer /><Chevron w={15} sw={1.7} /></Combo>
      </FormRow>
      <ScaleGroup>
        <ScaleTitle><Fit w={66}>Scale to:</Fit></ScaleTitle>
        <ScaleButtons>
          <Button $w={202} $h={32}><Fit w={86}>Visible Area</Fit></Button>
          <Button $w={200} $h={34}><SelectionIcon /><Fit w={68}>Selection</Fit></Button>
        </ScaleButtons>
      </ScaleGroup>
      <DialogButtons>
        <Button $w={114}><Fit w={45}>Reset</Fit></Button>
        <Button $w={115} $focus><Fit w={41}>Close</Fit></Button>
      </DialogButtons>
    </Dialog>
  );
}

export default function App() {
  return (
    <>
      <Global />
      <Window>
        <TitleBar>
          <AppIcon />
          <Fit w={140}>PyFAI Calibration</Fit>
          <Spacer />
          <CaptionButtons>
            <svg width="17" height="17"><path d="M0 9h17" stroke="#000" strokeWidth="1.700" /></svg>
            <svg width="17" height="17"><rect x="1" y="1" width="15" height="15" fill="none" stroke="#000" strokeWidth="1.700" /></svg>
            <svg width="17" height="17"><path d="M1 1l15 15M16 1L1 16" stroke="#000" strokeWidth="1.700" /></svg>
          </CaptionButtons>
        </TitleBar>
        <Body>
          <Sidebar>
            {NAV.map((n) => (
              <NavItem key={n.label} $active={n.active}>{n.icon}<Fit w={n.w}>{n.label}</Fit></NavItem>
            ))}
            <OnlineHelp><Fit w={101}>Online help...</Fit></OnlineHelp>
          </Sidebar>
          <PlotPanel>
            <PlotToolbar>
              <Handle $gap={6} />
              <ToolButton $on><Lens /></ToolButton>
              <ToolButton><MoveIcon /></ToolButton>
              <ToolSeparator $h={50} $l={2} $r={7} $c="#c0c0c0" />
              <Handle $gap={5} />
              <ToolButton><Lens crossed /></ToolButton>
              <ToolButton $on><Palette /></ToolButton>
              <ToolButton $w={54}><DiscIcon /></ToolButton>
              <ToolButton $w={44}><YAxisIcon /></ToolButton>
            </PlotToolbar>
            <Canvas><Diffraction /></Canvas>
            <StatusBar>
              <StatusItem $w={209} $gap={8}><b><Fit w={18}>X:</Fit></b><Fit w={72}>2131.306</Fit></StatusItem>
              <StatusItem $w={208} $gap={8}><b><Fit w={17}>Y:</Fit></b><Fit w={78}>-531.4496</Fit></StatusItem>
              <StatusItem $w={562} $gap={7}><b><Fit w={53}>Value:</Fit></b><Fit w={26}>n/a</Fit></StatusItem>
              <ToolSeparator $h={24} $l={0} $r={0} />
            </StatusBar>
          </PlotPanel>
          <RightColumn />
        </Body>
        <Menu>
          {MENU.map((m) => (
            <MenuItem key={m.label} $on={m.on}>
              {m.kind === "brush" ? <BrushSlot><Brush s={0.68} /></BrushSlot> : <MenuGlyph kind={m.kind} />}
              <Fit w={m.w}>{m.label}</Fit>
            </MenuItem>
          ))}
        </Menu>
        <Pointer width="190" height="70" viewBox="2070 930 190 70">
          <defs><filter id="arrowShadow" x="-20%" y="-60%" width="140%" height="220%"><feGaussianBlur stdDeviation="5" /></filter></defs>
          <path d="M2096 957h114v-9l20 15-20 15v-9H2096z" fill="#000" opacity=".65" filter="url(#arrowShadow)" />
          <path d="M2119 958.500h81v-9l27 13.500-27 13.500v-9h-81z" fill="#fe0000" />
        </Pointer>
        <Highlight />
        <ColormapDialog />
      </Window>
    </>
  );
}
